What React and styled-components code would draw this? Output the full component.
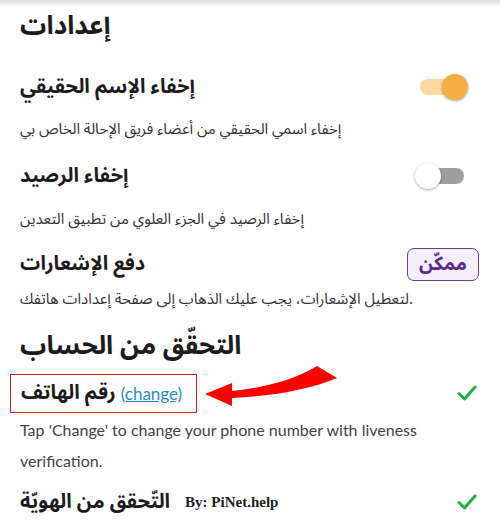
import React from "react";
import styled, { createGlobalStyle } from "styled-components";

const GlobalStyle = createGlobalStyle`
  body {
    margin: 0;
    background: #ffffff;
    font-family: "Noto Sans Arabic", "DejaVu Sans", "Noto Sans", sans-serif;
    color: #1c1c1c;
  }
`;

export default function App() {
  return (
    <>
      <GlobalStyle />
      <Shade />
      <Page>
        <Heading>إعدادات</Heading>

        <Row top={24}>
          <Label>إخفاء الإسم الحقيقي</Label>
          <Switch on />
        </Row>
        <Description top={14}>إخفاء اسمي الحقيقي من أعضاء فريق الإحالة الخاص بي</Description>

        <Row top={19}>
          <Label>إخفاء الرصيد</Label>
          <Switch />
        </Row>
        <Description top={15}>إخفاء الرصيد في الجزء العلوي من تطبيق التعدين</Description>

        <Row top={17}>
          <Label>دفع الإشعارات</Label>
          <Pill>ممكّن</Pill>
        </Row>
        <Description top={7}>لتعطيل الإشعارات، يجب عليك الذهاب إلى صفحة إعدادات هاتفك.</Description>

        <Heading section>التحقّق من الحساب</Heading>

        <Row top={8} tall>
          <Marked>
            <Label>رقم الهاتف</Label>
            <ChangeLink>(change)</ChangeLink>
          </Marked>
          <Arrow viewBox="0 0 140 50" width="140" height="50">
            <path
              d="M5 34 L32 23 L32 31 C62 28 95 20 117 6 L137 18 C105 31 70 36 32 38 L32 46 Z"
              fill="#ff0000"
            />
          </Arrow>
          <Check />
        </Row>
        <Note>Tap 'Change' to change your phone number with liveness verification.</Note>

        <Row top={8}>
          <Inline>
            <Label>التّحقق من الهويّة</Label>
            <Credit>By: PiNet.help</Credit>
          </Inline>
          <Check />
        </Row>
      </Page>
    </>
  );
}

function Switch({ on }) {
  return (
    <Track on={on ? 1 : 0}>
      <Knob on={on ? 1 : 0} />
    </Track>
  );
}

function Check() {
  return (
    <CheckIcon viewBox="0 0 20 18" width="20" height="18">
      <path
        d="M2 9.5 L7.5 15 L18 3"
        fill="none"
        stroke="#1eb14a"
        strokeWidth="3"
        strokeLinecap="round"
        strokeLinejoin="round"
      />
    </CheckIcon>
  );
}

const Shade = styled.div`
  height: 7px;
  background: linear-gradient(#dcdcdc, #ffffff);
`;

const Page = styled.div`
  padding: 0 20px;
  display: flex;
  flex-direction: column;
  height: 521px;
  overflow: hidden;
`;

const Heading = styled.div`
  font-size: 26px;
  font-weight: bold;
  line-height: 38px;
  flex-shrink: 0;
  margin-top: ${(p) => (p.section ? "18px" : "0px")};
`;

const Row = styled.div`
  position: relative;
  flex-shrink: 0;
  display: flex;
  align-items: center;
  justify-content: space-between;
  margin-top: ${(p) => p.top}px;
  height: ${(p) => (p.tall ? "40px" : "36px")};
`;

const Label = styled.div`
  font-size: 20px;
  font-weight: bold;
  line-height: 30px;
`;

const Description = styled.div`
  flex-shrink: 0;
  font-size: 15px;
  line-height: 20px;
  color: #333333;
  margin-top: ${(p) => p.top}px;
`;

const Track = styled.div`
  position: relative;
  width: 44px;
  height: 16px;
  border-radius: 8px;
  margin-right: 16px;
  background: ${(p) => (p.on ? "#fdd9a2" : "#9e9e9e")};
`;

const Knob = styled.div`
  position: absolute;
  top: -5px;
  left: ${(p) => (p.on ? "22px" : "-5px")};
  width: 26px;
  height: 26px;
  border-radius: 50%;
  background: ${(p) => (p.on ? "#f8ae43" : "#ffffff")};
  box-shadow: 0 1px 3px rgba(0, 0, 0, 0.35);
`;

const Pill = styled.div`
  width: 72px;
  height: 33px;
  box-sizing: border-box;
  border: 1.5px solid #6a3b9c;
  border-radius: 7px;
  background: #f4effb;
  color: #5d2b90;
  font-size: 19px;
  font-weight: bold;
  display: flex;
  align-items: center;
  justify-content: center;
  margin-right: 1px;
`;

const Marked = styled.div`
  display: flex;
  align-items: center;
  gap: 5px;
  height: 39px;
  box-sizing: border-box;
  margin-left: -10px;
  padding: 0 14px 0 10px;
  border: 1px solid #d42020;
`;

const ChangeLink = styled.span`
  font-family: "Lato", "Noto Sans", sans-serif;
  font-size: 17px;
  color: #2a8bc9;
  text-decoration: underline;
`;

const Arrow = styled.svg`
  position: absolute;
  left: 180px;
  top: -13px;
`;

const CheckIcon = styled.svg`
  margin-right: 3px;
`;

const Note = styled.div`
  flex-shrink: 0;
  font-family: "Lato", "Noto Sans", sans-serif;
  font-size: 16px;
  line-height: 31px;
  color: #444444;
  margin-top: 1px;
`;

const Inline = styled.div`
  display: flex;
  align-items: center;
  gap: 15px;
`;

const Credit = styled.span`
  font-family: "Liberation Serif", serif;
  font-weight: bold;
  font-size: 15px;
  color: #222222;
`;
